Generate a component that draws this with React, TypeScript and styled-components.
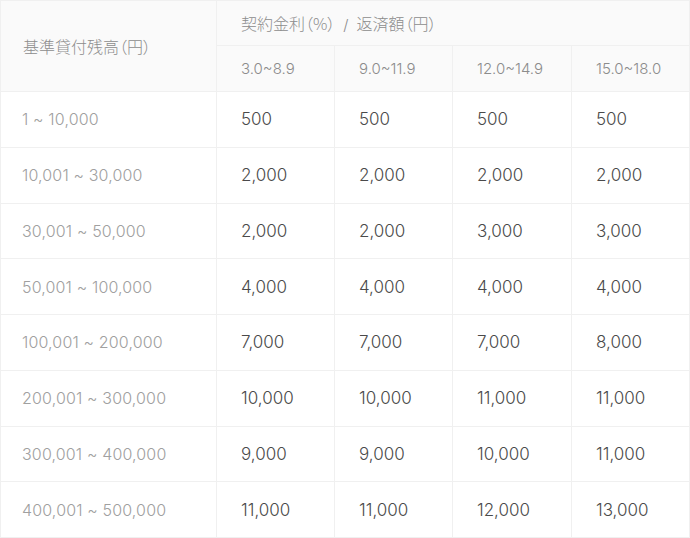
import React from "react";
import styled, { createGlobalStyle } from "styled-components";

const Global = createGlobalStyle`
  html, body { margin: 0; padding: 0; background: #ffffff; }
  body {
    font-family: Inter, "Noto Sans CJK JP", sans-serif;
    font-weight: 300;
    -webkit-font-smoothing: antialiased;
  }
`;

const Table = styled.table`
  border-collapse: collapse;
  width: 689px;
  table-layout: fixed;
  border: 1px solid #f0f0f0;
  border-left: none;
  border-top: none;
`;

const HeadCell = styled.th<{ $tall?: boolean }>`
  background: #fafafa;
  border: 1px solid #f0f0f0;
  color: #8c8c8c;
  font-weight: 300;
  font-size: 15px;
  text-align: left;
  padding: 0 0 0 ${(p) => (p.$tall ? 22 : 24)}px;
  vertical-align: middle;
  white-space: nowrap;
`;

const Jp = styled.span`
  font-family: "Noto Sans CJK JP", sans-serif;
  font-size: 16px;
  font-weight: 300;
  font-feature-settings: "palt";
`;

const TopRow = styled.tr`
  height: 45px;
`;

const SubRow = styled.tr`
  height: 46px;
`;

const BodyRow = styled.tr`
  height: 55.75px;
`;

const RangeCell = styled.td`
  border: 1px solid #f0f0f0;
  color: #a0a0a0;
  font-size: 16px;
  letter-spacing: 0.15px;
  padding: 0 0 0 21px;
  white-space: nowrap;
`;

const ValueCell = styled.td`
  border: 1px solid #f0f0f0;
  color: #4a4a4a;
  font-size: 17px;
  padding: 0 0 0 24px;
  white-space: nowrap;
`;

const Slash = styled.span`
  margin: 0 8px;
`;

const rates = ["3.0~8.9", "9.0~11.9", "12.0~14.9", "15.0~18.0"];

const rows: [string, string[]][] = [
  ["1 ~ 10,000", ["500", "500", "500", "500"]],
  ["10,001 ~ 30,000", ["2,000", "2,000", "2,000", "2,000"]],
  ["30,001 ~ 50,000", ["2,000", "2,000", "3,000", "3,000"]],
  ["50,001 ~ 100,000", ["4,000", "4,000", "4,000", "4,000"]],
  ["100,001 ~ 200,000", ["7,000", "7,000", "7,000", "8,000"]],
  ["200,001 ~ 300,000", ["10,000", "10,000", "11,000", "11,000"]],
  ["300,001 ~ 400,000", ["9,000", "9,000", "10,000", "11,000"]],
  ["400,001 ~ 500,000", ["11,000", "11,000", "12,000", "13,000"]],
];

export default function App() {
  return (
    <>
      <Global />
      <Table>
        <colgroup>
          <col style={{ width: 216 }} />
          <col style={{ width: 118 }} />
          <col style={{ width: 118 }} />
          <col style={{ width: 119 }} />
          <col style={{ width: 118 }} />
        </colgroup>
        <thead>
          <TopRow>
            <HeadCell $tall rowSpan={2}>
              <Jp>基準貸付残高（円）</Jp>
            </HeadCell>
            <HeadCell colSpan={4}>
              <Jp>契約金利（%）</Jp>
              <Slash>/</Slash>
              <Jp>返済額（円）</Jp>
            </HeadCell>
          </TopRow>
          <SubRow>
            {rates.map((r) => (
              <HeadCell key={r}>{r}</HeadCell>
            ))}
          </SubRow>
        </thead>
        <tbody>
          {rows.map(([range, vals]) => (
            <BodyRow key={range}>
              <RangeCell>{range}</RangeCell>
              {vals.map((v, i) => (
                <ValueCell key={i}>{v}</ValueCell>
              ))}
            </BodyRow>
          ))}
        </tbody>
      </Table>
    </>
  );
}
